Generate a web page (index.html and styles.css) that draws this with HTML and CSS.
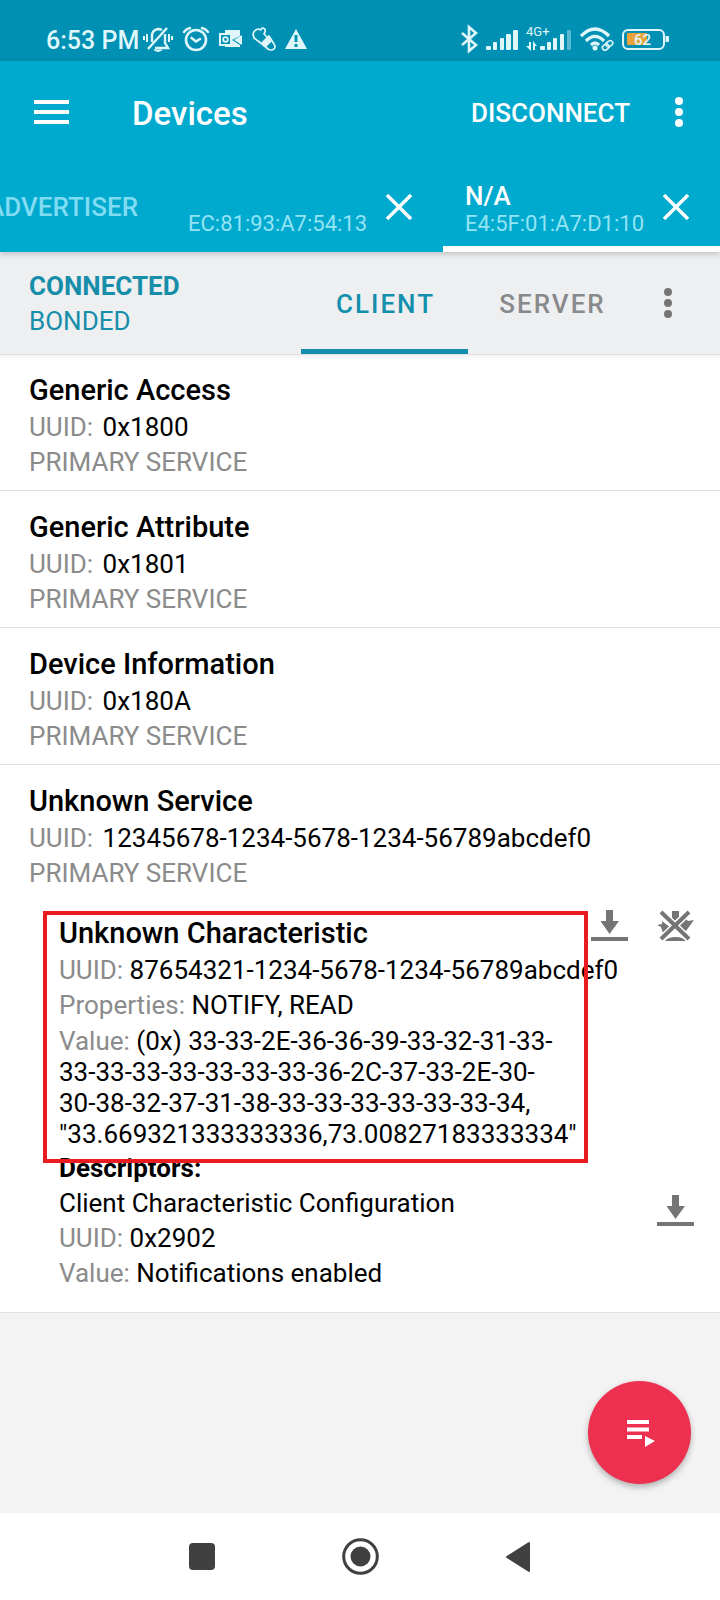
FILE: index.html
```html
<!DOCTYPE html>
<html lang="en">
<head>
<meta charset="utf-8">
<meta name="viewport" content="width=device-width, initial-scale=1">
<title>Devices</title>
<link rel="stylesheet" href="styles.css">
</head>
<body>
<div class="statusbar">
  <div class="status-left">
    <span class="clock">6:53 PM</span>
    <svg width="30" height="30" viewBox="0 0 30 30" fill="none" stroke="currentColor" stroke-width="2.400">
      <path d="M9 18V12q0-6 6-7q2 0 4 1M22 10v9l3 5H12M5 25L24 4"/>
      <path d="M11 26h8q-4 3-8 0z" fill="currentColor" stroke-width="1"/>
      <path stroke-width="2" d="M1 12v4M4 10v8M26 10v8M29 12v4"/>
    </svg>
    <svg width="28" height="30" viewBox="0 0 28 30" fill="none" stroke="currentColor" stroke-width="2.600" stroke-linecap="round">
      <circle cx="14" cy="16" r="10"/><path d="M9.500 14l4.500 3.500 4-2.500M2 8q2-3 6-4M26 8q-2-3-6-4"/>
    </svg>
    <svg width="24" height="30" viewBox="0 0 24 30">
      <path fill="currentColor" d="M6 6h15v6l-8 4 8 5v2H6v-2h7V10H6z"/>
      <path fill="currentColor" d="M23 11v10l-8-5z"/>
      <rect x="1" y="10" width="11" height="11" class="cutout" stroke="currentColor" stroke-width="2"/>
      <circle cx="6.500" cy="15.500" r="2.300" fill="none" stroke="currentColor" stroke-width="1.800"/>
    </svg>
    <svg width="24" height="30" viewBox="0 0 24 30" fill="none" stroke="currentColor" stroke-width="1.700" stroke-linejoin="round">
      <path d="M1 10q1-4 5-5l3 1q0-2 2-2 3 1 2 4l-1 2 4 4-6 6-8-6zM10 20l7-8 5 8q2 3 0 5-3 2-6 0z"/>
      <path d="M10 19l6-6 3 4-5 5z" fill="currentColor"/>
    </svg>
    <svg width="22" height="30" viewBox="0 0 22 30">
      <path fill="currentColor" d="M11 5l11 20H0z"/><path class="cutout" d="M9.500 11h3v7h-3zM9.500 20h3v3h-3z"/>
    </svg>
  </div>
  <div class="status-right">
    <svg width="18" height="30" viewBox="0 0 18 30" fill="none" stroke="currentColor" stroke-width="2.600">
      <path d="M2 9l14 12-7 6V3l7 6L2 21"/>
    </svg>
    <svg width="32" height="30" viewBox="0 0 32 30" fill="currentColor">
      <rect y="22" width="5" height="4" rx="1"/><rect x="7" y="18" width="4" height="8" rx="1"/><rect x="14" y="14" width="4" height="12" rx="1"/><rect x="20" y="10" width="5" height="16" rx="1"/><rect x="27" y="6" width="5" height="20" rx="1"/>
    </svg>
    <span class="network">
      <span class="network-type">4G+</span>
      <svg width="46" height="30" viewBox="0 0 46 30" fill="currentColor">
        <path d="M3 18v4H0l5 5v-9zM7 26v-9l4 5H9v4z"/>
        <rect x="14" y="22" width="5" height="4" rx="1"/><rect x="21" y="18" width="4" height="8" rx="1"/><rect x="27" y="14" width="4" height="12" rx="1"/><rect x="34" y="10" width="4" height="16" rx="1"/><rect x="41" y="6" width="4" height="20" rx="1" opacity=".4"/>
      </svg>
    </span>
    <svg width="34" height="30" viewBox="0 0 34 30" fill="none" stroke="currentColor" stroke-width="3.200">
      <path d="M1 12q14-14 28 0M6 17q9-9 18 0M11 21q4-4 8 0"/>
      <circle cx="15" cy="24" r="2.500" fill="currentColor" stroke="none"/>
      <g stroke-width="1.600"><rect x="26" y="17.500" width="7" height="5" rx="2.500" transform="rotate(-35 29 20)"/><rect x="22" y="21" width="7" height="5" rx="2.500" transform="rotate(-35 25 23)"/></g>
    </svg>
    <span class="battery">
      <svg width="47" height="30" viewBox="0 0 47 30">
        <rect x="1" y="6" width="41" height="19" rx="5" fill="none" stroke="currentColor" stroke-width="2"/>
        <rect x="5" y="9" width="20" height="12" rx="1" fill="#e8a33a"/>
        <path d="M43.500 12H46q1 0 1 1v4q0 1-1 1h-2.500z" fill="currentColor"/>
      </svg>
      <span class="battery-level">62</span>
    </span>
  </div>
</div>

<header class="header">
  <div class="toolbar">
    <button class="icon-button" aria-label="Menu">
      <svg width="35" height="24" viewBox="0 0 35 24" fill="currentColor"><path d="M0 0h35v4H0zM0 10h35v4H0zM0 20h35v4H0z"/></svg>
    </button>
    <h1 class="page-title">Devices</h1>
    <button class="disconnect">DISCONNECT</button>
    <button class="icon-button" aria-label="More options">
      <svg width="8" height="30" viewBox="0 0 8 30" fill="currentColor"><circle cx="4" cy="4" r="4"/><circle cx="4" cy="15" r="4"/><circle cx="4" cy="26" r="4"/></svg>
    </button>
  </div>
  <nav class="device-tabs">
    <div class="device-tab device-tab-plain"><button class="tab-label">ADVERTISER</button></div>
    <div class="device-tab">
      <button class="tab-label"><span class="tab-name"></span><span class="tab-address">EC:81:93:A7:54:13</span></button>
      <button class="icon-button" aria-label="Close EC:81:93:A7:54:13">
        <svg width="26" height="26" viewBox="0 0 26 26" stroke="currentColor" stroke-width="3.400"><path d="M1 1l24 24M25 1L1 25"/></svg>
      </button>
    </div>
    <div class="device-tab device-tab-active">
      <button class="tab-label"><span class="tab-name">N/A</span><span class="tab-address">E4:5F:01:A7:D1:10</span></button>
      <button class="icon-button" aria-label="Close E4:5F:01:A7:D1:10">
        <svg width="26" height="26" viewBox="0 0 26 26" stroke="currentColor" stroke-width="3.400"><path d="M1 1l24 24M25 1L1 25"/></svg>
      </button>
    </div>
  </nav>
</header>

<section class="connection">
  <div class="connection-state">
    <div class="connected">CONNECTED</div>
    <div>BONDED</div>
  </div>
  <button class="role-tab role-tab-active">CLIENT</button>
  <button class="role-tab">SERVER</button>
  <button class="icon-button connection-menu" aria-label="Connection options">
    <svg width="8" height="30" viewBox="0 0 8 30" fill="currentColor"><circle cx="4" cy="4" r="4"/><circle cx="4" cy="15" r="4"/><circle cx="4" cy="26" r="4"/></svg>
  </button>
</section>

<main class="content">
  <article class="service">
    <h2 class="title">Generic Access</h2>
    <p class="line"><span class="label service-label">UUID:</span> 0x1800</p>
    <p class="line label">PRIMARY SERVICE</p>
  </article>
  <article class="service">
    <h2 class="title">Generic Attribute</h2>
    <p class="line"><span class="label service-label">UUID:</span> 0x1801</p>
    <p class="line label">PRIMARY SERVICE</p>
  </article>
  <article class="service">
    <h2 class="title">Device Information</h2>
    <p class="line"><span class="label service-label">UUID:</span> 0x180A</p>
    <p class="line label">PRIMARY SERVICE</p>
  </article>
  <article class="service service-open">
    <h2 class="title">Unknown Service</h2>
    <p class="line"><span class="label service-label">UUID:</span> 12345678-1234-5678-1234-56789abcdef0</p>
    <p class="line label">PRIMARY SERVICE</p>

    <section class="characteristic">
      <div class="details highlighted">
        <h3 class="title">Unknown Characteristic</h3>
        <p class="line"><span class="label">UUID:</span> 87654321-1234-5678-1234-56789abcdef0</p>
        <p class="line"><span class="label">Properties:</span> NOTIFY, READ</p>
        <p class="value"><span class="label">Value:</span> (0x) 33-33-2E-36-36-39-33-32-31-33-<br>33-33-33-33-33-33-33-36-2C-37-33-2E-30-<br>30-38-32-37-31-38-33-33-33-33-33-33-34,<br>"33.669321333333336,73.00827183333334"</p>
      </div>
      <div class="actions">
        <button class="icon-button" aria-label="Read characteristic">
          <svg width="37" height="31" viewBox="0 0 37 31" fill="currentColor"><path d="M15 0h7v11h6l-9.500 13L9.500 11H15zM0 27h37v4H0z"/></svg>
        </button>
        <button class="icon-button" aria-label="Disable notifications">
          <svg width="37" height="31" viewBox="0 0 37 31">
            <path fill="currentColor" d="M15 1h7v11l-3.500 4-3.500-4zM0 15l5-1v-3l9 7-8 5-2-6zM37 10l-8 11-8-4 8-8 2 2zM8 31q3-4 10.500-4T29 31z"/>
            <path class="strike-gap" d="M4 2l28 27M32 2L4 29"/>
            <path stroke="currentColor" stroke-width="4" d="M4 2l28 27M32 2L4 29"/>
          </svg>
        </button>
      </div>
    </section>

    <section class="descriptors">
      <h4 class="line descriptors-title">Descriptors:</h4>
      <div class="descriptor">
        <div class="details">
          <p class="line">Client Characteristic Configuration</p>
          <p class="line"><span class="label">UUID:</span> 0x2902</p>
          <p class="line"><span class="label">Value:</span> Notifications enabled</p>
        </div>
        <button class="icon-button descriptor-read" aria-label="Read descriptor">
          <svg width="37" height="31" viewBox="0 0 37 31" fill="currentColor"><path d="M15 0h7v11h6l-9.500 13L9.500 11H15zM0 27h37v4H0z"/></svg>
        </button>
      </div>
    </section>
  </article>
  <button class="fab" aria-label="Record macro">
    <svg width="28" height="27" viewBox="0 0 28 27" fill="currentColor"><path d="M0 0h22v4H0zM0 7.500h22v4H0zM0 15h15v4H0zM18 16l10 5-10 6z"/></svg>
  </button>
</main>

<footer class="navbar">
  <button class="nav-button" aria-label="Recent apps"><svg width="26" height="27" viewBox="0 0 26 27"><rect width="26" height="27" rx="4" fill="currentColor"/></svg></button>
  <button class="nav-button" aria-label="Home"><svg width="37" height="37" viewBox="0 0 37 37"><circle cx="18.500" cy="18.500" r="16.800" fill="none" stroke="currentColor" stroke-width="3"/><circle cx="18.500" cy="18.500" r="10" fill="currentColor"/></svg></button>
  <button class="nav-button" aria-label="Back"><svg width="26" height="32" viewBox="0 0 26 32"><path d="M24 2v28L2 16z" fill="currentColor" stroke="currentColor" stroke-width="2" stroke-linejoin="round"/></svg></button>
</footer>
</body>
</html>
```
FILE: styles.css
```css
* { box-sizing: border-box; }

body {
  display: flex;
  flex-direction: column;
  min-height: 100vh;
  margin: 0;
  background: #fff;
  color: #000;
  font: 400 26px/35px Roboto, "Liberation Sans", sans-serif;
}

h1, h2, h3, h4, p { margin: 0; font-weight: 400; }

button {
  padding: 0;
  border: 0;
  background: none;
  color: inherit;
  font: inherit;
  cursor: pointer;
}

svg { display: block; flex: none; }

.icon-button { display: flex; flex: none; }

/* System status bar */
.statusbar {
  display: flex;
  justify-content: space-between;
  height: 61px;
  padding: 24px 51px 0 46px;
  background: #0090b3;
  color: #dff6fb;
}
.status-left { display: flex; gap: 9px; }
.clock { margin-right: -5px; font-size: 25px; font-weight: 500; line-height: 33px; white-space: nowrap; }
.cutout { fill: #0090b3; }
.status-right { display: flex; gap: 8px; }
.network { position: relative; }
.network-type { position: absolute; top: 1px; left: 0; font-size: 13px; line-height: 14px; }
.battery { position: relative; }
.battery-level { position: absolute; top: 7px; left: 12px; font-size: 15px; font-weight: 500; line-height: 18px; }

/* App header */
.header { position: relative; z-index: 2; background: #00a9ce; color: #fff; box-shadow: 0 2px 6px rgba(0, 0, 0, .2); }
.toolbar { display: flex; align-items: center; height: 101px; padding: 1px 37px 0 34px; }
.page-title { flex: 1; margin-left: 63px; padding-top: 2px; font-size: 33px; font-weight: 500; }
.disconnect { margin-right: 45px; padding-top: 2px; font-weight: 500; }

.device-tabs { display: flex; justify-content: flex-end; height: 90px; overflow: hidden; }
.device-tab {
  display: flex;
  flex: none;
  align-items: center;
  justify-content: space-between;
  width: 277px;
  padding: 6px 31px 0 22px;
  border-bottom: 6px solid transparent;
}
.device-tab-plain { width: auto; padding: 0 28px; color: #80dcf2; font-weight: 500; }
.device-tab-active { border-bottom-color: #fff; }
.tab-label { display: flex; flex-direction: column; gap: 2px; padding-top: 6px; text-align: left; }
.tab-name { height: 26px; font-weight: 500; line-height: 26px; }
.tab-address { color: #93e4f5; font-size: 22px; line-height: 26px; }

/* Connection state and role tabs */
.connection {
  position: relative;
  z-index: 1;
  display: flex;
  height: 103px;
  padding-right: 48px;
  border-bottom: 1px solid #dedfe1;
  background: #eeeff1;
  box-shadow: 0 2px 4px rgba(0, 0, 0, .06);
}
.connection-state { flex: 1; padding: 17px 0 0 29px; color: #168ea9; }
.connected { font-weight: 700; }
.role-tab {
  width: 167px;
  padding: 2px 0 0 2px;
  border-top: 5px solid transparent;
  border-bottom: 5px solid transparent;
  color: #88898b;
  font-weight: 500;
  letter-spacing: 2px;
}
.role-tab-active { border-bottom-color: #128fac; color: #128fac; }
.connection-menu { align-self: center; margin-left: 29px; color: #757575; }

/* Service list */
.content { position: relative; flex: 1; min-height: 1158px; background: #f3f3f3; }
.service { padding: 17px 26px 10px 29px; border-bottom: 1px solid #e0e0e0; background: #fff; }
.service + .service { padding-top: 18px; }
.service + .service-open { padding-bottom: 21px; }
.title { margin-bottom: 1px; font-size: 29px; font-weight: 500; line-height: 37px; }
.label { color: #8b8b8b; }
.service-label { margin-right: 3px; }
.line { white-space: nowrap; }

.characteristic { display: flex; padding: 24px 0 0 30px; }
.details { flex: 1; min-width: 0; }
.highlighted { position: relative; }
.highlighted::after {
  content: "";
  position: absolute;
  top: -4px;
  right: 3px;
  bottom: -12px;
  left: -16px;
  border: 4px solid #ea1c1f;
  pointer-events: none;
}
.value { padding: 3px 0 1px; line-height: 31px; white-space: nowrap; }
.actions { display: flex; gap: 29px; margin-top: -5px; align-items: flex-start; color: #757575; }
.strike-gap { stroke: #fff; stroke-width: 7px; }

.descriptors { padding-left: 30px; }
.descriptors-title { font-weight: 700; }
.descriptor { display: flex; align-items: flex-start; }
.descriptor-read { margin-top: 9px; color: #757575; }

.fab {
  position: absolute;
  right: 29px;
  bottom: 29px;
  display: flex;
  align-items: center;
  justify-content: center;
  width: 103px;
  height: 103px;
  padding: 2px 0 0 2px;
  border-radius: 50%;
  background: #ed304f;
  box-shadow: 0 3px 6px rgba(0, 0, 0, .28);
  color: #fff;
}

/* System navigation */
.navbar { display: flex; align-items: center; justify-content: center; gap: 106px; height: 87px; color: #404040; }
.nav-button { display: flex; justify-content: center; width: 52px; }
```
